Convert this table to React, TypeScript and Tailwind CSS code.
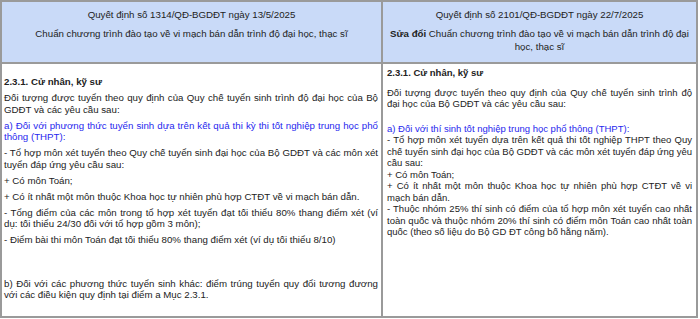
import React from "react";

const font = { fontFamily: '"Liberation Sans", Arial, sans-serif' };

export default function App() {
  return (
    <div className="w-[700px] h-[319px] bg-white" style={font}>
      <div className="w-[698px] h-[318px] border-2 border-[#9a9a9a] grid grid-cols-[381px_1fr] grid-rows-[62px_1fr] text-[9.7px] leading-[11.5px] text-[#222]">
        {/* Header left */}
        <div className="bg-[#c9daf8] border-r-2 border-b-2 border-[#9a9a9a] text-center pt-[7px] px-[4px]">
          <p>Quyết định số 1314/QĐ-BGDĐT ngày 13/5/2025</p>
          <p className="mt-[7.5px]">Chuẩn chương trình đào tạo về vi mạch bán dẫn trình độ đại học, thạc sĩ</p>
        </div>
        {/* Header right */}
        <div className="bg-[#c9daf8] border-b-2 border-[#9a9a9a] text-center pt-[7px] px-[3px]">
          <p>Quyết định số 2101/QĐ-BGDĐT ngày 22/7/2025</p>
          <p className="mt-[6.5px] leading-[13px]">
            <span className="font-bold">Sửa đổi</span> Chuẩn chương trình đào tạo về vi mạch bán dẫn trình độ đại học, thạc sĩ
          </p>
        </div>
        {/* Body left */}
        <div className="border-r-2 border-[#9a9a9a] pt-[12px] pl-[2px] pr-[3px] text-justify">
          <p className="font-bold">2.3.1. Cử nhân, kỹ sư</p>
          <p className="mt-[4.5px]">Đối tượng được tuyển theo quy định của Quy chế tuyển sinh trình độ đại học của Bộ GDĐT và các yêu cầu sau:</p>
          <p className="mt-[4.5px] text-[#2727ee]">a) Đối với phương thức tuyển sinh dựa trên kết quả thi kỳ thi tốt nghiệp trung học phổ thông (THPT):</p>
          <p className="mt-[4.5px]">- Tổ hợp môn xét tuyển theo Quy chế tuyển sinh đại học của Bộ GDĐT và các môn xét tuyển đáp ứng yêu cầu sau:</p>
          <p className="mt-[4.5px]">+ Có môn Toán;</p>
          <p className="mt-[4.5px]">+ Có ít nhất một môn thuộc Khoa học tự nhiên phù hợp CTĐT về vi mạch bán dẫn.</p>
          <p className="mt-[4.5px]">- Tổng điểm của các môn trong tổ hợp xét tuyển đạt tối thiểu 80% thang điểm xét (ví dụ: tối thiểu 24/30 đối với tổ hợp gồm 3 môn);</p>
          <p className="mt-[4.5px]">- Điểm bài thi môn Toán đạt tối thiểu 80% thang điểm xét (ví dụ tối thiểu 8/10)</p>
          <p className="mt-[32px]">b) Đối với các phương thức tuyển sinh khác: điểm trúng tuyển quy đổi tương đương với các điều kiện quy định tại điểm a Mục 2.3.1.</p>
        </div>
        {/* Body right */}
        <div className="pt-[3px] pl-[4px] pr-[4px] text-justify text-[9.5px]">
          <p className="font-bold">2.3.1. Cử nhân, kỹ sư</p>
          <p className="mt-[8px]">Đối tượng được tuyển theo quy định của Quy chế tuyển sinh trình độ đại học của Bộ GDĐT và các yêu cầu sau:</p>
          <p className="mt-[13px] text-[#2727ee]">a) Đối với thí sinh tốt nghiệp trung học phổ thông (THPT):</p>
          <p>- Tổ hợp môn xét tuyển dựa trên kết quả thi tốt nghiệp THPT theo Quy chế tuyển sinh đại học của Bộ GDĐT và các môn xét tuyển đáp ứng yêu cầu sau:</p>
          <p>+ Có môn Toán;</p>
          <p>+ Có ít nhất một môn thuộc Khoa học tự nhiên phù hợp CTĐT về vi mạch bán dẫn.</p>
          <p>- Thuộc nhóm 25% thí sinh có điểm của tổ hợp môn xét tuyển cao nhất toàn quốc và thuộc nhóm 20% thí sinh có điểm môn Toán cao nhất toàn quốc (theo số liệu do Bộ GD ĐT công bố hằng năm).</p>
        </div>
      </div>
    </div>
  );
}
